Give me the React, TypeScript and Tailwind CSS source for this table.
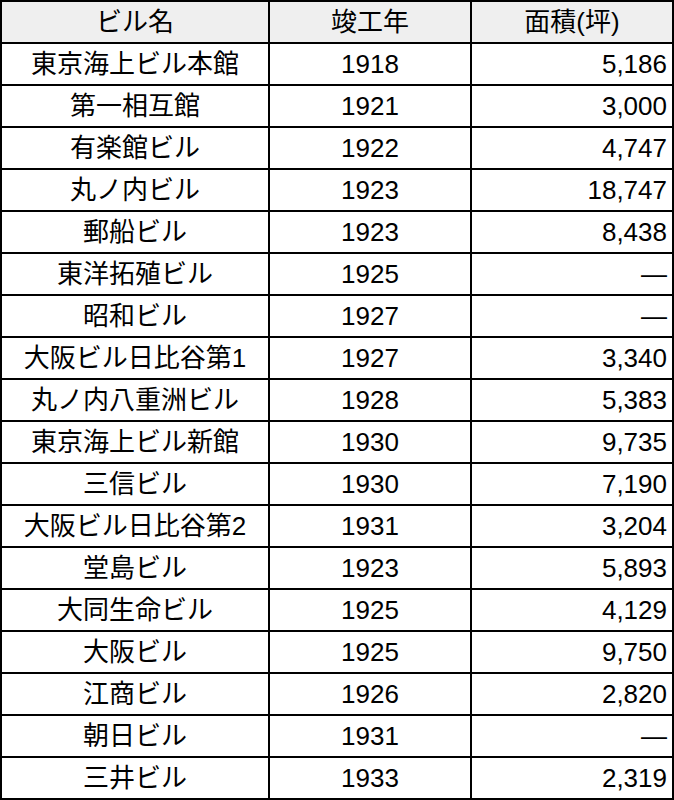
const rows: [string, string, string][] = [
  ['東京海上ビル本館', '1918', '5,186'],
  ['第一相互館', '1921', '3,000'],
  ['有楽館ビル', '1922', '4,747'],
  ['丸ノ内ビル', '1923', '18,747'],
  ['郵船ビル', '1923', '8,438'],
  ['東洋拓殖ビル', '1925', '—'],
  ['昭和ビル', '1927', '—'],
  ['大阪ビル日比谷第1', '1927', '3,340'],
  ['丸ノ内八重洲ビル', '1928', '5,383'],
  ['東京海上ビル新館', '1930', '9,735'],
  ['三信ビル', '1930', '7,190'],
  ['大阪ビル日比谷第2', '1931', '3,204'],
  ['堂島ビル', '1923', '5,893'],
  ['大同生命ビル', '1925', '4,129'],
  ['大阪ビル', '1925', '9,750'],
  ['江商ビル', '1926', '2,820'],
  ['朝日ビル', '1931', '—'],
  ['三井ビル', '1933', '2,319'],
];

const App = () => {
  return (
    <div
      className="w-[674px] bg-white text-black"
      style={{ fontFamily: '"Liberation Sans", "Noto Sans CJK JP", sans-serif' }}
    >
      <div className="grid grid-cols-[266px_200px_200px] gap-[2px] bg-black p-[2px] text-[26px] leading-none">
        <div className="h-10 bg-[#efefef] flex items-center justify-center">ビル名</div>
        <div className="h-10 bg-[#efefef] flex items-center justify-center">竣工年</div>
        <div className="h-10 bg-[#efefef] flex items-center justify-center">面積(坪)</div>
        {rows.map(([name, year, area]) => (
          <div key={name} className="contents">
            <div className="h-10 bg-white flex items-center justify-center">{name}</div>
            <div className="h-10 bg-white flex items-center justify-center">{year}</div>
            <div className="h-10 bg-white flex items-center justify-end pr-[5px]">{area}</div>
          </div>
        ))}
      </div>
    </div>
  );
};

export default App;
